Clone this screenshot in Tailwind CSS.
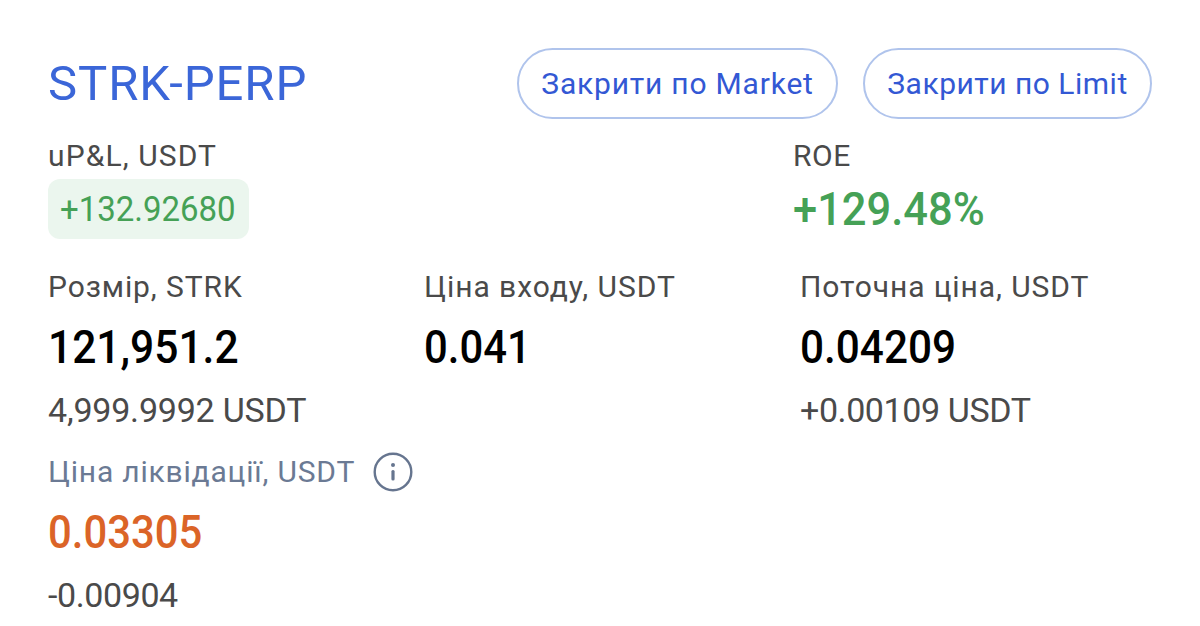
<!DOCTYPE html>
<html lang="uk">
<head>
<meta charset="UTF-8">
<title>STRK-PERP</title>
<script src="https://cdn.jsdelivr.net/npm/@tailwindcss/browser@4"></script>
</head>
<body class="bg-white font-['Roboto',sans-serif] w-[1200px] h-[626px] overflow-hidden">
<div class="pl-[48px] pr-[48px] pt-[48px]">
  <div class="flex items-center justify-between h-[71px]">
    <h1 class="text-[49px] leading-[71px] text-[#3b66d8] tracking-[0.9px]">STRK-PERP</h1>
    <div class="flex gap-[25px]">
      <div class="w-[321px] h-[71px] rounded-full border-[2.5px] border-[#b0c4ec] flex items-center justify-center text-[30px] tracking-[0.8px] text-[#3358d4]">Закрити по Market</div>
      <div class="w-[289px] h-[71px] rounded-full border-[2.5px] border-[#b0c4ec] flex items-center justify-center text-[30px] tracking-[0.5px] text-[#3358d4]">Закрити по Limit</div>
    </div>
  </div>

  <div class="flex mt-[17px]">
    <div class="w-[745px]">
      <div class="text-[30px] leading-[40px] tracking-[1.1px] text-[#4a4a4a]">uP&amp;L, USDT</div>
      <div class="mt-[3px] w-[201px] h-[60px] pl-[12px] rounded-[12px] bg-[#ebf6ee] text-[35px] leading-[61px] text-[#45a156] whitespace-nowrap">
        <span class="inline-block origin-left scale-x-[0.942]">+132.92680</span>
      </div>
    </div>
    <div>
      <div class="text-[30px] leading-[40px] tracking-[0.5px] text-[#4a4a4a]">ROE</div>
      <div class="mt-[3px] text-[47px] leading-[60px] font-medium text-[#45a156] origin-left scale-x-[0.925]">+129.48%</div>
    </div>
  </div>

  <div class="grid grid-cols-[376px_376px_1fr] mt-[28px]">
    <div>
      <div class="text-[30px] leading-[40px] tracking-[0.9px] text-[#4a4a4a]">Розмір, STRK</div>
      <div class="mt-[10px] text-[47px] leading-[60px] font-medium text-black origin-left scale-x-[0.905]">121,951.2</div>
      <div class="mt-[13px] text-[34px] leading-[40px] text-[#4a4a4a] tracking-[-0.2px]">4,999.9992 USDT</div>
    </div>
    <div>
      <div class="text-[30px] leading-[40px] tracking-[0.95px] text-[#4a4a4a]">Ціна входу, USDT</div>
      <div class="mt-[10px] text-[47px] leading-[60px] font-medium text-black origin-left scale-x-[0.89]">0.041</div>
    </div>
    <div>
      <div class="text-[30px] leading-[40px] tracking-[0.9px] text-[#4a4a4a]">Поточна ціна, USDT</div>
      <div class="mt-[10px] text-[47px] leading-[60px] font-medium text-black origin-left scale-x-[0.9]">0.04209</div>
      <div class="mt-[13px] text-[34px] leading-[40px] text-[#4a4a4a] tracking-[-0.4px]">+0.00109 USDT</div>
    </div>
  </div>

  <div class="flex items-center gap-[18px] mt-[22px] h-[40px]">
    <span class="text-[30px] leading-[40px] tracking-[0.8px] text-[#6b7a94]">Ціна ліквідації, USDT</span>
    <svg class="w-[40px] h-[40px]" viewBox="0 0 40 40" fill="none">
      <circle cx="20" cy="20" r="18.3" stroke="#66758f" stroke-width="2.4"/>
      <circle cx="20" cy="13" r="2" fill="#66758f"/>
      <rect x="18.4" y="18" width="3.2" height="10.5" rx="1.5" fill="#66758f"/>
    </svg>
  </div>
  <div class="mt-[10px] text-[47px] leading-[60px] font-medium text-[#db6427] origin-left scale-x-[0.89]">0.03305</div>
  <div class="mt-[13px] text-[34px] leading-[40px] text-[#4a4a4a] tracking-[-0.4px]">-0.00904</div>
</div>
</body>
</html>
